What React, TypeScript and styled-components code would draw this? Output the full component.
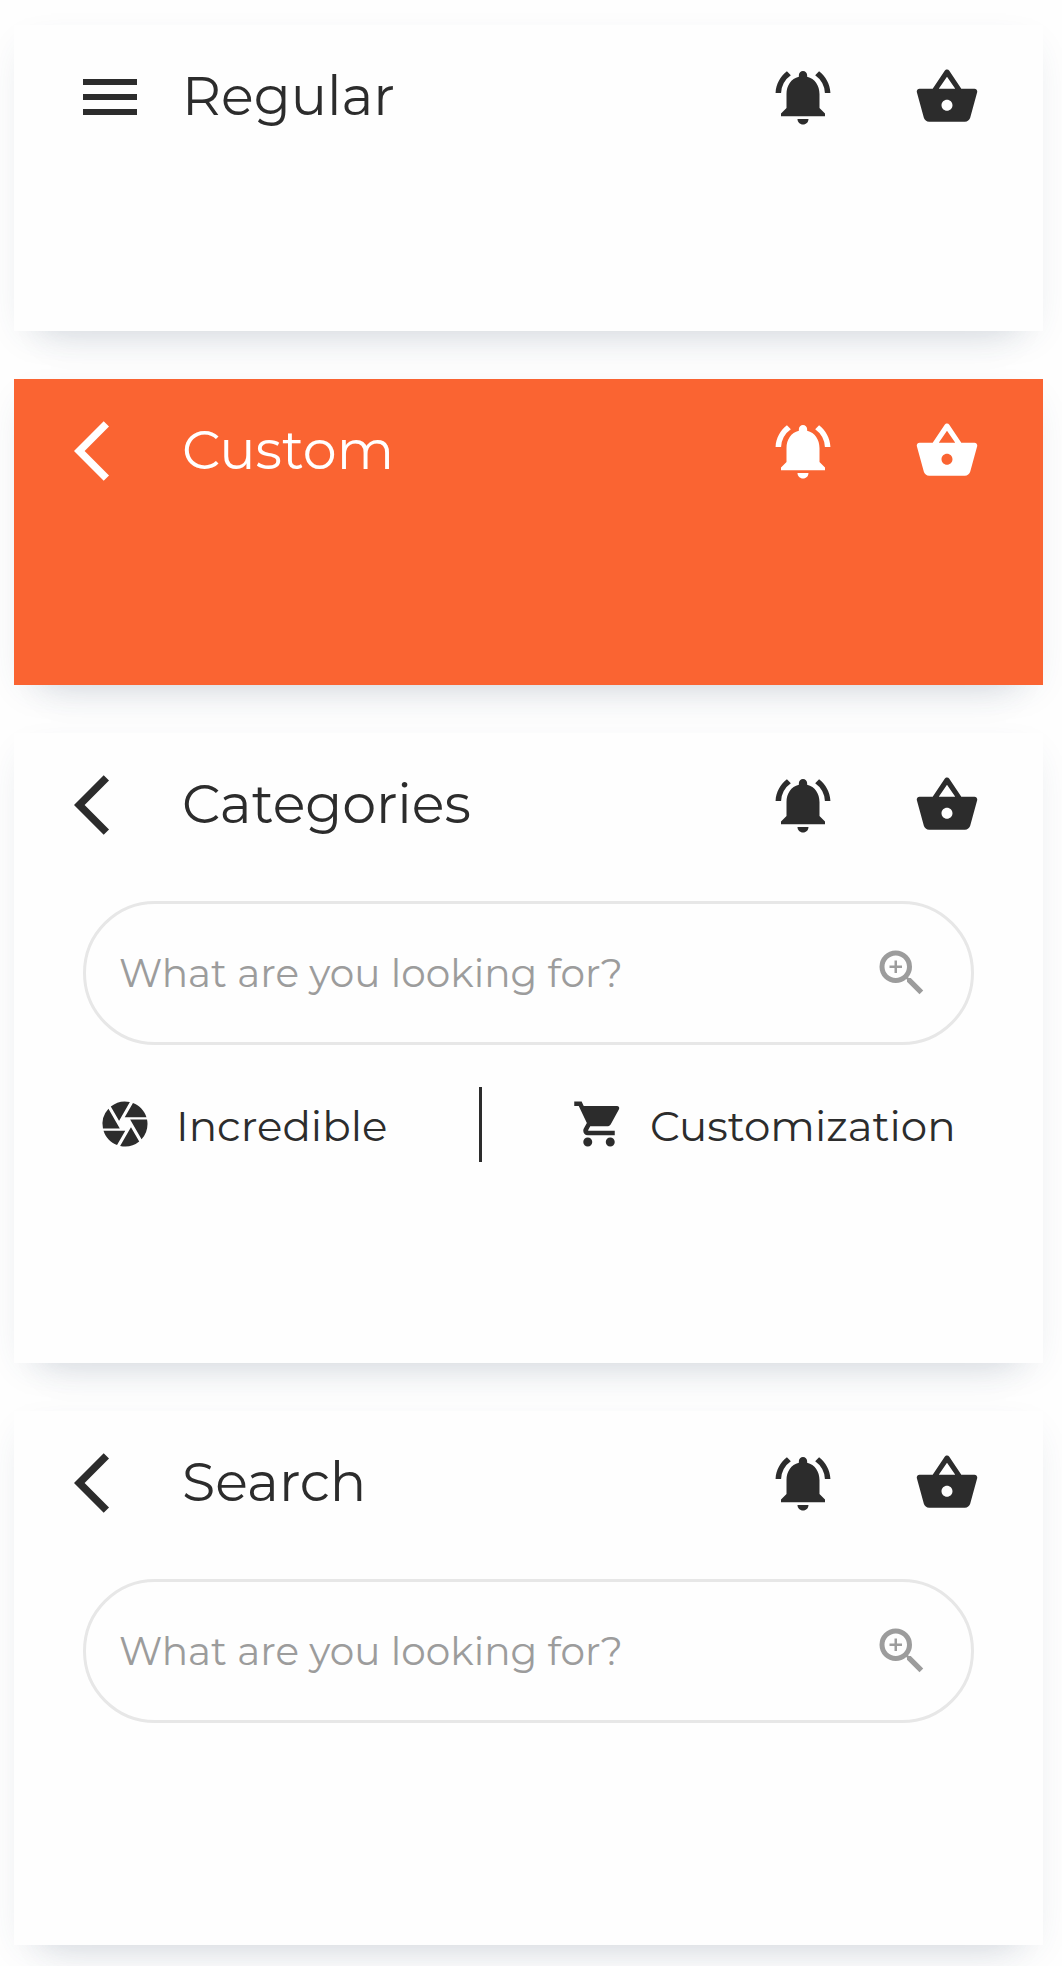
import React from 'react';
import styled, { createGlobalStyle } from 'styled-components';
import {
  MdMenu,
  MdArrowBackIos,
  MdNotificationsActive,
  MdShoppingBasket,
  MdZoomIn,
  MdCamera,
  MdShoppingCart,
} from 'react-icons/md';

const ink = '#2c2c2c';
const muted = '#9c9c9c';

const GlobalStyle = createGlobalStyle`
  *, *::before, *::after { box-sizing: border-box; }
  body {
    margin: 0;
    background: #fefefe;
    overflow: hidden;
    font-family: Montserrat, Inter, 'Open Sans', sans-serif;
  }
  svg { display: block; flex: none; }
`;

const Page = styled.main`
  display: flex;
  flex-direction: column;
  gap: 48px;
  width: 1062px;
  height: 1966px;
  padding: 25px 19px 0 14px;
  overflow: hidden;
`;

const Header = styled.section<{ $height: number; $bg?: string; $fg?: string }>`
  flex: none;
  height: ${(p) => p.$height}px;
  background: ${(p) => p.$bg ?? '#fefefe'};
  color: ${(p) => p.$fg ?? ink};
  box-shadow:
    0 12px 36px -14px rgba(58, 80, 107, 0.18),
    0 40px 36px -34px rgba(58, 80, 107, 0.1);
`;

const Bar = styled.div`
  display: flex;
  align-items: center;
  height: 144px;
  padding: 0 63px 0 60px;
`;

const Title = styled.h1`
  flex: 1;
  margin: 0 0 0 36px;
  padding-bottom: 2px;
  font-size: 54px;
  font-weight: 400;
  line-height: 66px;
  white-space: nowrap;
`;

const Actions = styled.div`
  display: flex;
  gap: 78px;
`;

const SearchBox = styled.div`
  display: flex;
  align-items: center;
  justify-content: space-between;
  height: 144px;
  margin: 24px 69px 0;
  padding: 0 39px 0 33px;
  border: 3px solid #e7e7e7;
  border-radius: 72px;
  color: ${muted};
`;

const Placeholder = styled.span`
  font-size: 39px;
  font-weight: 400;
  line-height: 48px;
  letter-spacing: 0.03px;
  white-space: nowrap;
`;

const Links = styled.div`
  display: grid;
  grid-template-columns: 396px 3px 1fr;
  align-items: center;
  margin: 42px 69px 0;
`;

const LinkItem = styled.div<{ $indent: number }>`
  display: flex;
  align-items: center;
  gap: 24px;
  padding: 0 0 1px ${(p) => p.$indent}px;
`;

const LinkLabel = styled.span`
  padding-top: 4px;
  font-size: 42px;
  font-weight: 400;
  line-height: 51px;
  white-space: nowrap;
`;

const Divider = styled.div`
  height: 75px;
  background: ${ink};
`;

type TopBarProps = { title: string; menu?: boolean };

function TopBar({ title, menu }: TopBarProps) {
  return (
    <Bar>
      {menu ? <MdMenu size={72} /> : <MdArrowBackIos size={72} />}
      <Title>{title}</Title>
      <Actions>
        <MdNotificationsActive size={66} />
        <MdShoppingBasket size={66} />
      </Actions>
    </Bar>
  );
}

function Search() {
  return (
    <SearchBox>
      <Placeholder>What are you looking for?</Placeholder>
      <MdZoomIn size={60} />
    </SearchBox>
  );
}

export default function App() {
  return (
    <>
      <GlobalStyle />
      <Page>
        <Header $height={306}>
          <TopBar title="Regular" menu />
        </Header>
        <Header $height={306} $bg="#fa6432" $fg="#ffffff">
          <TopBar title="Custom" />
        </Header>
        <Header $height={630}>
          <TopBar title="Categories" />
          <Search />
          <Links>
            <LinkItem $indent={15}>
              <MdCamera size={54} />
              <LinkLabel>Incredible</LinkLabel>
            </LinkItem>
            <Divider />
            <LinkItem $indent={90}>
              <MdShoppingCart size={54} />
              <LinkLabel>Customization</LinkLabel>
            </LinkItem>
          </Links>
        </Header>
        <Header $height={534}>
          <TopBar title="Search" />
          <Search />
        </Header>
      </Page>
    </>
  );
}
